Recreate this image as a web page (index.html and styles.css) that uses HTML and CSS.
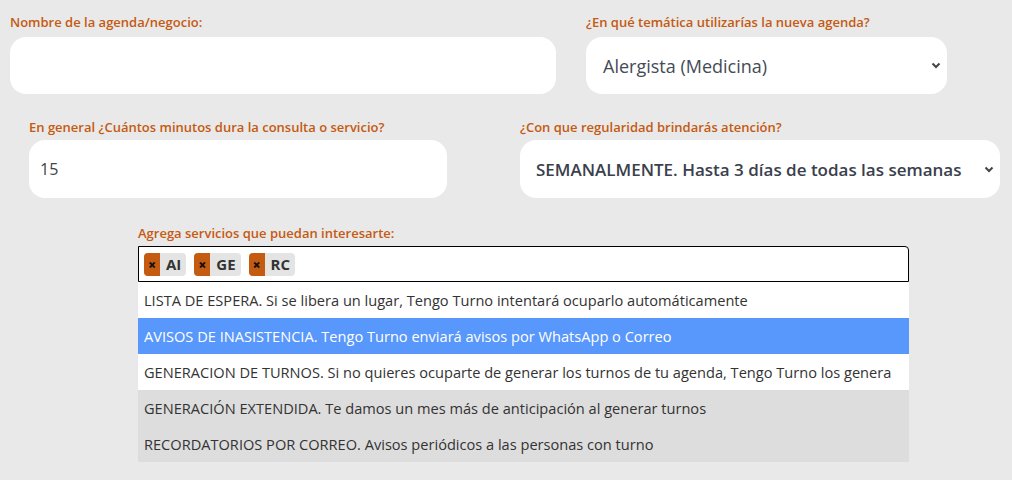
FILE: index.html
```html
<!DOCTYPE html>
<html lang="es">
<head>
    <meta charset="UTF-8">
    <meta name="viewport" content="width=device-width, initial-scale=1.0">
    <title>Nueva agenda</title>
    <link rel="stylesheet" href="styles.css">
</head>
<body>
    <div class="row row-one">
        <div class="field field-name">
            <label class="field-label" for="nombre">Nombre de la agenda/negocio:</label>
            <input class="box" type="text" id="nombre">
        </div>
        <div class="field field-topic">
            <label class="field-label" for="tematica">¿En qué temática utilizarías la nueva agenda?</label>
            <div class="box select-box">
                <span class="select-text">Alergista (Medicina)</span>
                <svg class="chevron" width="10" height="7" viewBox="0 0 10 7"><path d="M1.5 1.5l3.5 3.5 3.5-3.5" fill="none" stroke="#444" stroke-width="2"/></svg>
            </div>
        </div>
    </div>

    <div class="row row-two">
        <div class="field field-minutes">
            <label class="field-label" for="minutos">En general ¿Cuántos minutos dura la consulta o servicio?</label>
            <input class="box box-num" type="text" id="minutos" value="15">
        </div>
        <div class="field field-freq">
            <label class="field-label">¿Con que regularidad brindarás atención?</label>
            <div class="box select-box select-bold">
                <span class="select-text">SEMANALMENTE. Hasta 3 días de todas las semanas</span>
                <svg class="chevron" width="10" height="7" viewBox="0 0 10 7"><path d="M1.5 1.5l3.5 3.5 3.5-3.5" fill="none" stroke="#444" stroke-width="2"/></svg>
            </div>
        </div>
    </div>

    <div class="field field-services">
        <label class="field-label">Agrega servicios que puedan interesarte:</label>
        <div class="multi">
            <span class="tag"><span class="tag-x">×</span><span class="tag-name">AI</span></span>
            <span class="tag"><span class="tag-x">×</span><span class="tag-name">GE</span></span>
            <span class="tag"><span class="tag-x">×</span><span class="tag-name">RC</span></span>
        </div>
        <ul class="options">
            <li>LISTA DE ESPERA. Si se libera un lugar, Tengo Turno intentará ocuparlo automáticamente</li>
            <li class="highlight">AVISOS DE INASISTENCIA. Tengo Turno enviará avisos por WhatsApp o Correo</li>
            <li>GENERACION DE TURNOS. Si no quieres ocuparte de generar los turnos de tu agenda, Tengo Turno los genera</li>
            <li class="chosen">GENERACIÓN EXTENDIDA. Te damos un mes más de anticipación al generar turnos</li>
            <li class="chosen">RECORDATORIOS POR CORREO. Avisos periódicos a las personas con turno</li>
        </ul>
    </div>
</body>
</html>
```

FILE: styles.css
```css
body {
    margin: 0;
    background: #e9e9e9;
    font-family: "Open Sans", "Noto Sans", sans-serif;
    color: #333;
}

.row {
    display: flex;
}

.row-one {
    padding: 13px 0 0 10px;
    gap: 30px;
}

.row-two {
    padding: 24px 0 0 29px;
    gap: 73px;
}

.field {
    display: flex;
    flex-direction: column;
}

.field-label {
    font-size: 13px;
    font-weight: 600;
    color: #c55a11;
    line-height: 18px;
    margin-bottom: 6px;
}

.row-two .field-label {
    margin-bottom: 4px;
}

.box {
    box-sizing: border-box;
    height: 57px;
    background: #fff;
    border: none;
    border-radius: 16px;
    font-family: inherit;
    outline: none;
}

.field-name .box { width: 546px; }
.field-topic .box { width: 361px; }
.field-minutes .box { width: 418px; height: 58px; }
.field-freq .box { width: 480px; height: 58px; }

.box-num {
    padding: 0 11px;
    font-size: 16px;
    color: #444;
}

.select-box {
    display: flex;
    align-items: center;
    justify-content: space-between;
    padding: 0 6px 0 17px;
}

.select-text {
    font-size: 18px;
    color: #444b55;
    white-space: nowrap;
}

.select-bold {
    padding-left: 16px;
}

.select-bold .select-text {
    font-size: 17px;
    font-weight: 600;
    color: #3a404c;
}

.field-services {
    margin: 26px 0 0 138px;
    width: 771px;
}

.field-services .field-label {
    margin-bottom: 4px;
}

.multi {
    box-sizing: border-box;
    height: 36px;
    border: 1px solid #000;
    border-radius: 0 4px 0 0;
    background: #fff;
    display: flex;
    align-items: center;
    gap: 8px;
    padding: 0 5px;
}

.tag {
    display: flex;
    height: 23px;
    border-radius: 4px;
    overflow: hidden;
    background: #e4e4e4;
    font-size: 15px;
    font-weight: 700;
    color: #333;
}

.tag-x {
    width: 16px;
    background: #c55a11;
    color: #111;
    font-size: 14px;
    font-weight: 800;
    display: flex;
    align-items: center;
    justify-content: center;
}

.tag-name {
    padding: 0 5px 0 6px;
    line-height: 23px;
}

.options {
    list-style: none;
    margin: 0;
    padding: 0;
    background: #fff;
}

.options li {
    height: 36px;
    line-height: 36px;
    padding: 0 6px;
    font-size: 14.6px;
    color: #333;
    white-space: nowrap;
}

.options .highlight {
    background: #5897fb;
    color: #fff;
}

.options .chosen {
    background: #ddd;
}
```
